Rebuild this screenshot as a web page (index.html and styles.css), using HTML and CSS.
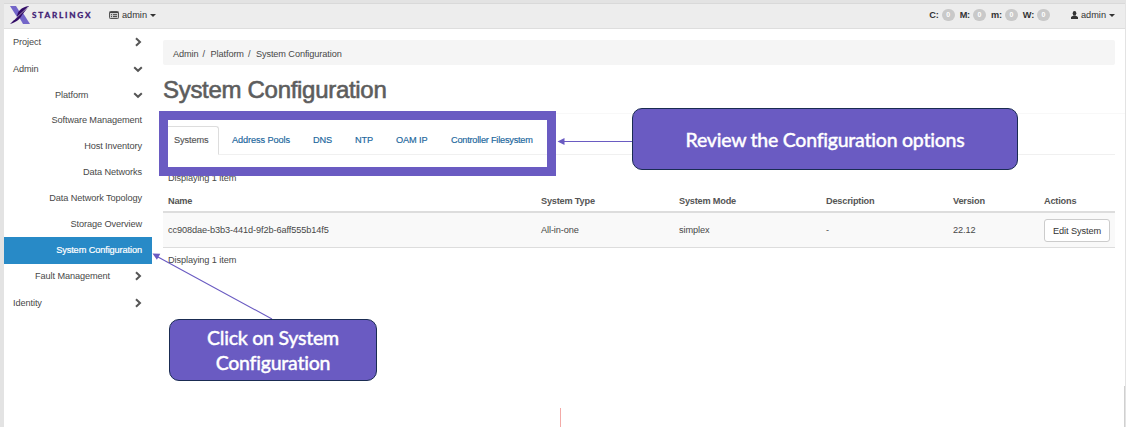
FILE: index.html
```html
<!DOCTYPE html>
<html lang="en">
<head>
<meta charset="utf-8">
<title>System Configuration</title>
<link rel="stylesheet" href="styles.css">
</head>
<body>
<svg class="defs" width="0" height="0"><defs>
<symbol id="right" viewBox="0 0 10 10"><path d="M3 1.2 7 5 3 8.8" fill="none" stroke="#555" stroke-width="2"/></symbol>
<symbol id="down" viewBox="0 0 10 10"><path d="M1.2 3.2 5 6.8 8.8 3.2" fill="none" stroke="#555" stroke-width="2"/></symbol>
</defs></svg>
<div class="app">
<header class="topbar">
  <svg class="mark" viewBox="0 0 22 20"><path d="M1 1h6l5 8-4 3z" fill="#7366c9"/><path d="M14 8 21 19h-7l-4-7z" fill="#7366c9"/><path d="M20 1C12 2 8 7 8 12L1 19C8 17 11 14 13 10L20 1z" fill="#310b66"/><path d="M19 2 5 15" stroke="#ededed" stroke-width=".6"/></svg>
  <span class="wordmark">STARLINGX</span>
  <svg class="listicon" viewBox="0 0 10 8"><rect x=".5" y=".5" width="9" height="7" rx=".8" fill="#d0d0d0" stroke="#555"/><path d="M1 1.5h8M2 3.7h1M4 3.7h4M2 5.6h1M4 5.6h4" stroke="#444"/></svg>
  <span class="project">admin</span><i class="caret"></i>
  <div class="alarms"><b>C:</b><i class="badge">0</i><b>M:</b><i class="badge">0</i><b>m:</b><i class="badge">0</i><b>W:</b><i class="badge">0</i></div>
  <svg class="user" viewBox="0 0 7 8"><ellipse cx="3.5" cy="2.2" rx="1.8" ry="2.2" fill="#333"/><path d="M0 8V6.300C.2 5.300 2 5 2.300 4.400h2.400C5 5 6.800 5.300 7 6.300V8z" fill="#333"/></svg>
  <span class="username">admin</span><i class="caret"></i>
</header>
<div class="body">
<nav class="side">
  <div class="item top"><span>Project</span><svg><use href="#right"/></svg></div>
  <div class="item top"><span>Admin</span><svg><use href="#down"/></svg></div>
  <div class="item group"><span>Platform</span><svg><use href="#down"/></svg></div>
  <div class="item leaf">Software Management</div>
  <div class="item leaf">Host Inventory</div>
  <div class="item leaf">Data Networks</div>
  <div class="item leaf">Data Network Topology</div>
  <div class="item leaf">Storage Overview</div>
  <div class="item leaf active">System Configuration</div>
  <div class="item fault"><span>Fault Management</span><svg><use href="#right"/></svg></div>
  <div class="item top"><span>Identity</span><svg><use href="#right"/></svg></div>
</nav>
<main class="main">
  <div class="crumbs"><span>Admin</span><span>/</span><span class="c2">Platform</span><span>/</span><span class="c3">System Configuration</span></div>
  <h1 class="title">System Configuration</h1>
  <div class="tabs"><span class="tab on">Systems</span><span class="tab t2">Address Pools</span><span class="tab t3">DNS</span><span class="tab t4">NTP</span><span class="tab t5">OAM IP</span><span class="tab t6">Controller Filesystem</span></div>
  <div class="count">Displaying 1 item</div>
  <div class="row head"><span>Name</span><span>System Type</span><span>System Mode</span><span>Description</span><span>Version</span><span>Actions</span></div>
  <div class="row data"><span>cc908dae-b3b3-441d-9f2b-6aff555b14f5</span><span>All-in-one</span><span>simplex</span><span>-</span><span>22.12</span><span class="button">Edit System</span></div>
  <div class="count after">Displaying 1 item</div>
</main>
</div>
</div>
<div class="highlight"></div>
<svg class="arrows" viewBox="0 0 1126 427"><path d="M632 141.500H563M272 319 158 257" stroke="#6a5bc2" stroke-width="1.1" fill="none"/><path d="M557.500 141.500l7-3.500v7zM152.500 253.500l7.800.3-3.400 6z" fill="#6a5bc2"/><path d="M560.500 408v19" stroke="#f3aaa7"/><path d="M556 113.500h76M1018 113.500h107" stroke="#f8f8f8"/><path d="M1124.500 386v41" stroke="#d0d0d0"/></svg>
<div class="callout review"><span>Review the Configuration options</span></div>
<div class="callout click"><span>Click on System<br>Configuration</span></div>
</body>
</html>
```

FILE: styles.css
```css
* { box-sizing: border-box; }
body { margin: 0; width: 1126px; height: 427px; overflow: hidden; background: #e3e3e3; font: 9.2px "Liberation Sans", Arial, sans-serif; letter-spacing: -.1px; color: #484848; white-space: nowrap; }
.defs { position: absolute; }
.app { margin: 3px 1px 0 4px; height: 424px; background: #fff; }
.topbar { height: 26px; display: flex; align-items: center; background: #ededed; border-top: 1px solid #d9d9d9; border-bottom: 1px solid #dedede; padding: 0 10px 2px 5px; color: #333; }
.mark { width: 22px; height: 20px; }
.wordmark { margin-left: 1px; width: 62px; font: 700 8.2px Lato, sans-serif; letter-spacing: 1.8px; color: #3d1a73; -webkit-text-stroke: .3px #3d1a73; }
.listicon { width: 10px; height: 8px; margin-left: 15px; }
.project { margin-left: 3px; width: 25px; letter-spacing: 0; }
.caret { margin-left: 3px; border: 3px solid transparent; border-top-color: #333; border-bottom: 0; }
.alarms { margin-left: auto; display: flex; align-items: center; }
.alarms b { margin-left: 5px; letter-spacing: -.2px; }
.badge { width: 13px; height: 12px; margin-left: 3px; border-radius: 6px; background: #c9c9c9; color: #fff; font: 700 7px/12px "Liberation Sans", sans-serif; text-align: center; }
.user { width: 7px; height: 8px; margin-left: 21px; }
.username { margin-left: 3px; width: 25px; letter-spacing: 0; }
.body { display: flex; }
.side { width: 148px; display: flex; flex-direction: column; }
.item { height: 25.8px; display: flex; align-items: center; justify-content: space-between; padding-right: 9px; flex: none; }
.item svg { width: 10px; height: 10px; }
.top { height: 26.4px; padding-left: 9px; }
.group { padding-left: 51px; }
.leaf { justify-content: flex-end; padding-right: 10px; }
.active { height: 27px; background: #288ac7; color: #fff; -webkit-text-stroke: .2px #fff; }
.fault { padding-left: 31px; }
.main { margin: 11px 10px 0 11px; flex: 1; }
.crumbs { height: 25px; background: #f5f5f5; border-radius: 2px; display: flex; align-items: center; gap: 4px; padding: 2px 0 0 10px; }
.c2, .c3 { margin-left: 1.5px; }
.title { margin: 11px 0 0; height: 28px; font: 400 24px/28px "Liberation Sans", sans-serif; letter-spacing: -.3px; color: #5d5d5d; -webkit-text-stroke: .6px #5d5d5d; }
.tabs { margin-top: 22px; height: 29px; display: flex; border-bottom: 1px solid #f0f0f0; }
.tab { line-height: 29px; color: #20669c; -webkit-text-stroke: .15px; }
.on { width: 56px; height: 29px; padding-left: 10px; color: #555; background: #fff; border: 1px solid #ddd; border-bottom-color: #fff; border-radius: 3px 3px 0 0; line-height: 27px; }
.t2 { margin-left: 13px; width: 81px; }
.t3 { width: 42px; }
.t4 { width: 41px; }
.t5 { width: 55px; }
.t6 { letter-spacing: -.22px; }
.count { height: 22px; margin-top: 17px; padding-left: 5px; line-height: 12px; }
.row { display: grid; grid-template-columns: 373px 138px 147px 127px 91px 66px; padding-left: 5px; align-items: center; }
.head { height: 19px; font-weight: 700; color: #555; letter-spacing: -.2px; border-bottom: 2px solid #ddd; padding-bottom: 4px; }
.data { height: 35px; background: #f9f9f9; border-bottom: 1px solid #ddd; }
.button { height: 23px; line-height: 22px; text-align: center; background: #fff; border: 1px solid #ccc; border-radius: 3px; color: #333; }
.after { margin-top: 6px; }
.highlight { position: absolute; left: 159px; top: 111px; width: 397px; height: 65px; border: 9px solid #6a5bc2; }
.arrows { position: absolute; left: 0; top: 0; width: 1126px; height: 427px; }
.callout { position: absolute; display: flex; align-items: center; justify-content: center; text-align: center; background: #6a5bc2; border: 1px solid #1a2c52; border-radius: 10px; color: #fff; font: 500 19.5px/25px Lato, sans-serif; letter-spacing: -.25px; font-variant-ligatures: none; -webkit-text-stroke: .35px #fff; }
.review { left: 632px; top: 108px; width: 386px; height: 62px; }
.click { left: 169px; top: 319px; width: 208px; height: 62px; }
```
